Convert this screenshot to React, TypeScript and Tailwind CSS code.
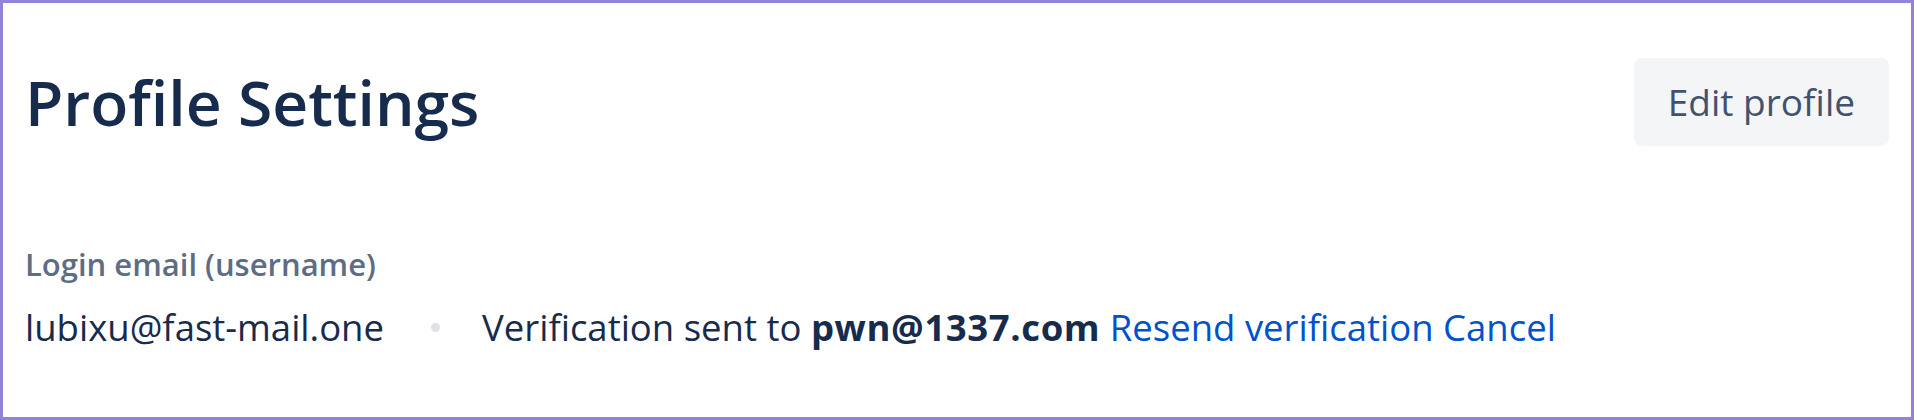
export default function App() {
  return (
    <div className="h-[420px] w-full box-border border-[3px] border-[#9381dc] bg-white px-[22px] font-['Open_Sans',sans-serif] text-[#172b4d]">
      <div className="flex items-center justify-between pt-[55px]">
        <h1 className="text-[62.4px] font-semibold leading-[88px] text-[#172b4d]">Profile Settings</h1>
        <button className="h-[88px] rounded-[8px] bg-[#f4f5f7] px-[34px] text-[37px] text-[#42526e]">
          Edit profile
        </button>
      </div>
      <div className="mt-[96px] text-[31px] font-semibold leading-[44px] text-[#5e6c84]">
        Login email (username)
      </div>
      <div className="mt-[14px] flex items-center text-[36.5px] leading-[55px]">
        <span>lubixu@fast-mail.one</span>
        <span className="ml-[47px] mr-[42px] h-[9px] w-[9px] rounded-full bg-[#dfe1e6]" />
        <span>
          Verification sent to <span className="font-bold tracking-[0.6px]">pwn@1337.com</span>{" "}
          <a className="text-[#0052cc]">Resend verification</a>{" "}
          <a className="text-[#0052cc]">Cancel</a>
        </span>
      </div>
    </div>
  );
}
